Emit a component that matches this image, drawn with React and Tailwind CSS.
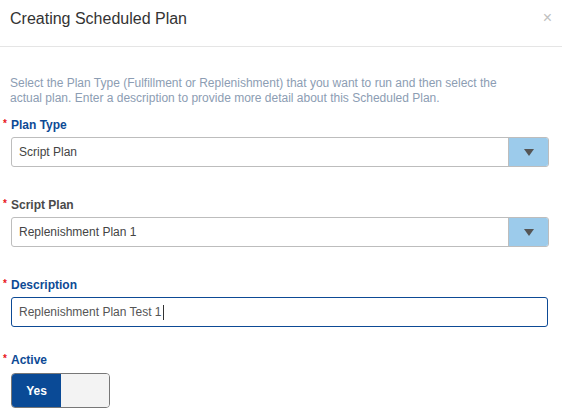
import React from 'react';

const Label = ({ children, gray }) => (
  <div className="flex items-start h-[15px] leading-[15px]">
    <span className="w-[11px] pl-[3px] text-[10px] leading-[12px] text-[#e8151b] font-bold">*</span>
    <span className={`text-[12px] font-bold ${gray ? 'text-[#4a4a4a]' : 'text-[#0d4a95]'}`}>{children}</span>
  </div>
);

const Select = ({ value }) => (
  <div className="flex h-[30px] ml-[11px] mr-[13px] border border-[#bdbdbd] rounded-[3px] overflow-hidden">
    <div className="flex-1 flex items-center pl-[7px] text-[12px] text-[#444]">{value}</div>
    <div className="w-[40px] flex items-center justify-center bg-[#9ccbeb] border-l border-[#bdbdbd]">
      <svg width="10" height="7" viewBox="0 0 10 7">
        <path d="M0 0 H10 L5 7 Z" fill="#555" />
      </svg>
    </div>
  </div>
);

export default function App() {
  return (
    <div className="w-[562px] h-[416px] bg-white font-['Liberation_Sans',Arial,sans-serif] overflow-hidden">
      {/* header */}
      <div className="h-[47px] flex items-start justify-between border-b border-[#e5e5e5] pl-[10px] pr-[10px]">
        <h1 className="mt-[9px] text-[16px] leading-[20px] text-[#333]">Creating Scheduled Plan</h1>
        <span className="mt-[9px] text-[16px] leading-[18px] text-[#c0c0c0]">×</span>
      </div>

      {/* body */}
      <div className="pt-[29px]">
        <p className="w-[515px] px-[10px] text-[12px] leading-[15px] text-[#8c9db3]">
          Select the Plan Type (Fulfillment or Replenishment) that you want to run and then select the actual plan. Enter a description to provide more detail about this Scheduled Plan.
        </p>

        <div className="mt-[12px]">
          <Label>Plan Type</Label>
          <div className="mt-[4px]"><Select value="Script Plan" /></div>
        </div>

        <div className="mt-[31px]">
          <Label gray>Script Plan</Label>
          <div className="mt-[4px]"><Select value="Replenishment Plan 1" /></div>
        </div>

        <div className="mt-[31px]">
          <Label>Description</Label>
          <div className="mt-[4px] ml-[11px] mr-[14px] h-[30px] flex items-center border border-[#0d4a95] rounded-[3px] pl-[7px] text-[12px] text-[#555]">
            Replenishment Plan Test 1
            <span className="ml-[1px] w-[1px] h-[15px] bg-[#333]" />
          </div>
        </div>

        <div className="mt-[26px]">
          <Label>Active</Label>
          <div className="mt-[5px] ml-[11px] w-[99px] h-[35px] flex border border-[#777] rounded-[4px] overflow-hidden">
            <div className="w-[49px] flex items-center justify-center bg-[#0a4a96] text-white text-[12px] font-bold">Yes</div>
            <div className="flex-1 bg-[#f3f3f3]" />
          </div>
        </div>
      </div>
    </div>
  );
}
